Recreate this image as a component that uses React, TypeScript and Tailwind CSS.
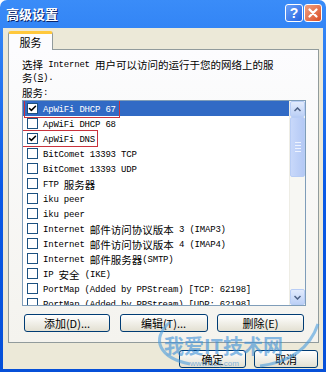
import { Check } from 'lucide-react';

const services = [
  { name: 'ApWiFi DHCP 67', checked: true, selected: true, mark: 'left-[1px] -top-[2px] h-[19px] w-[96px]' },
  { name: 'ApWiFi DHCP 68', checked: false },
  { name: 'ApWiFi DNS', checked: true, mark: '-left-[1px] -top-[1px] h-[17px] w-[76px]' },
  { name: 'BitComet 13393 TCP', checked: false },
  { name: 'BitComet 13393 UDP', checked: false },
  { name: 'FTP 服务器', checked: false },
  { name: 'iku peer', checked: false },
  { name: 'iku peer', checked: false },
  { name: 'Internet 邮件访问协议版本 3 (IMAP3)', checked: false },
  { name: 'Internet 邮件访问协议版本 4 (IMAP4)', checked: false },
  { name: 'Internet 邮件服务器(SMTP)', checked: false },
  { name: 'IP 安全 (IKE)', checked: false },
  { name: 'PortMap (Added by PPStream) [TCP: 62198]', checked: false },
  { name: 'PortMap (Added by PPStream) [UDP: 62198]', checked: false },
];

const sans = "font-['Noto_Sans_CJK_SC','Liberation_Sans',sans-serif]";

// old system font: narrow mono latin, wide CJK
function Mixed({ text }: { text: string }) {
  const parts = text.split(/([\u3000-\u9fff\uff00-\uffef]+)/);
  return (
    <>
      {parts.map((p, i) =>
        /[\u3000-\u9fff\uff00-\uffef]/.test(p) ? (
          <span key={i} className="align-middle text-[10.5px] font-['Noto_Sans_CJK_SC',sans-serif]">{p}</span>
        ) : (
          <span key={i} className="align-middle text-[9px] tracking-[-0.2px] font-['Liberation_Mono','Noto_Sans_CJK_SC',monospace] whitespace-pre">{p}</span>
        )
      )}
    </>
  );
}

function XpButton({ label, className }: { label: string; className: string }) {
  return (
    <button
      className={`${className} h-[18px] rounded-[3px] border border-[#003c74] bg-gradient-to-b from-white to-[#e3e0d2] text-[11px] leading-none text-black ${sans}`}
    >
      {label}
    </button>
  );
}

export default function App() {
  return (
    <div className="w-[329px] h-[375px] bg-white overflow-hidden">
      <div className="relative w-[326px] h-[372px] flex flex-col rounded-t-[7px] bg-gradient-to-b from-[#3a8cf8] via-[#0a5ae6] to-[#0650d8] px-[3px] pb-[3px]">
        {/* title bar */}
        <div className="h-[28px] flex items-center justify-between pl-[3px] pr-[1px]">
          <span className={`text-white text-[13px] font-bold [text-shadow:1px_1px_0_#0a246a] ${sans}`}>高级设置</span>
          <div className="flex gap-[1px] -mt-[3px]">
            <div className="w-[18px] h-[18px] rounded-[3px] border border-white bg-gradient-to-br from-[#6aa0f8] to-[#2563e0] flex items-center justify-center text-white text-[14px] font-bold leading-none font-['Liberation_Sans',sans-serif]">
              ?
            </div>
            <div className="w-[18px] h-[18px] rounded-[3px] border border-white bg-gradient-to-br from-[#f0a080] to-[#d84a20] flex items-center justify-center">
              <svg width="10" height="10" viewBox="0 0 10 10">
                <path d="M1.5 1.5 L8.5 8.5 M8.5 1.5 L1.5 8.5" stroke="white" strokeWidth="2.2" strokeLinecap="round" />
              </svg>
            </div>
          </div>
        </div>

        {/* body */}
        <div className="flex-1 bg-[#ece9d8] flex flex-col pl-[5px] pr-[4px] pt-[3px]">
          <div className="flex">
            <div className={`h-[19px] w-[45px] -mb-[1px] relative z-10 flex items-center justify-center border border-b-0 border-[#919b9c] border-t-[3px] border-t-[#ffc83c] rounded-t-[3px] bg-[#fcfcfe] text-[11px] text-black ${sans}`}>
              服务
            </div>
          </div>
          <div className="h-[294px] border border-[#919b9c] bg-gradient-to-b from-[#fcfcfe] to-[#f4f3ee] pl-[13px] pr-[12px] pt-[7px] flex flex-col">
            <div className="h-[13px] flex items-center text-black whitespace-nowrap leading-none">
              <span>
                <Mixed text="选择 Internet 用户可以访问的运行于您的网络上的服" />
              </span>
            </div>
            <div className="h-[13px] flex items-center text-black whitespace-nowrap leading-none">
              <span>
                <Mixed text="务(" />
                <span className="align-middle text-[9px] font-['Liberation_Mono',monospace] underline">S</span>
                <Mixed text=")." />
              </span>
            </div>
            <div className="mt-[2px] h-[13px] flex items-center text-black leading-none">
              <span>
                <Mixed text="服务:" />
              </span>
            </div>

            {/* list */}
            <div className="mt-[2px] h-[206px] border border-[#7f9db9] bg-white flex overflow-hidden">
              <div className="flex-1 flex flex-col">
                {services.map((s, i) => (
                  <div
                    key={i}
                    className={`relative h-[15px] shrink-0 flex items-center pl-[4px] ${s.selected ? 'bg-[#316ac5] text-white' : 'text-black'}`}
                  >
                    <div className="w-[11px] h-[11px] border border-[#1c5180] bg-white flex items-center justify-center shrink-0">
                      {s.checked && <Check className="w-[9px] h-[9px] text-black" strokeWidth={4} />}
                    </div>
                    <span className="ml-[5px] whitespace-nowrap leading-none">
                      <Mixed text={s.name} />
                    </span>
                    {s.mark && <div className={`absolute ${s.mark} border-[1.5px] border-[#c8323c]`} />}
                  </div>
                ))}
              </div>
              {/* scrollbar */}
              <div className="w-[16px] bg-[#f7f7f3] flex flex-col border-l border-[#eeede5]">
                <div className="h-[16px] rounded-[2px] border border-[#b8cdf5] bg-gradient-to-b from-[#e2ebfd] to-[#bcd0f6] flex items-center justify-center">
                  <svg width="7" height="5" viewBox="0 0 7 5">
                    <path d="M0.5 4 L3.5 1 L6.5 4" fill="none" stroke="#4d6185" strokeWidth="1.5" />
                  </svg>
                </div>
                <div className="h-[60px] rounded-[2px] border border-[#b8cdf5] bg-gradient-to-r from-[#c8d8fa] to-[#b4c9f5] flex flex-col items-center justify-center gap-[2px]">
                  <div className="w-[6px] h-[1px] bg-[#eef3fe]" />
                  <div className="w-[6px] h-[1px] bg-[#eef3fe]" />
                  <div className="w-[6px] h-[1px] bg-[#eef3fe]" />
                  <div className="w-[6px] h-[1px] bg-[#eef3fe]" />
                </div>
                <div className="flex-1" />
                <div className="h-[16px] rounded-[2px] border border-[#b8cdf5] bg-gradient-to-b from-[#e2ebfd] to-[#bcd0f6] flex items-center justify-center">
                  <svg width="7" height="5" viewBox="0 0 7 5">
                    <path d="M0.5 1 L3.5 4 L6.5 1" fill="none" stroke="#4d6185" strokeWidth="1.5" />
                  </svg>
                </div>
              </div>
            </div>

            <div className="mt-[8px] flex justify-between px-[2px]">
              <XpButton label="添加(D)..." className="w-[86px]" />
              <XpButton label="编辑(T)..." className="w-[88px]" />
              <XpButton label="删除(E)" className="w-[87px]" />
            </div>
          </div>

          <div className="mt-[7px] flex justify-end gap-[8px] pr-[1px]">
            <XpButton label="确定" className="w-[67px]" />
            <XpButton label="取消" className="w-[64px]" />
          </div>
        </div>

        {/* watermark */}
        <div className="absolute left-[150px] top-[320px] w-[170px] h-[50px] pointer-events-none opacity-60">
          <svg className="absolute inset-0" width="170" height="50" viewBox="0 0 170 50">
            <path d="M20 2 C 0 20, 10 38, 40 44" fill="none" stroke="#4a9ee0" strokeWidth="3" />
            <path d="M168 4 C 160 28, 140 42, 110 46" fill="none" stroke="#4a9ee0" strokeWidth="3" />
          </svg>
          <div className={`absolute left-[14px] top-[16px] text-[20px] leading-none font-bold text-[#3a8fd8] ${sans}`}>我爱IT技术网</div>
          <div className="absolute left-[40px] top-[40px] text-[8px] leading-none text-[#3a8fd8] font-['Liberation_Sans',sans-serif]">www.52ij.com</div>
        </div>
      </div>
    </div>
  );
}
